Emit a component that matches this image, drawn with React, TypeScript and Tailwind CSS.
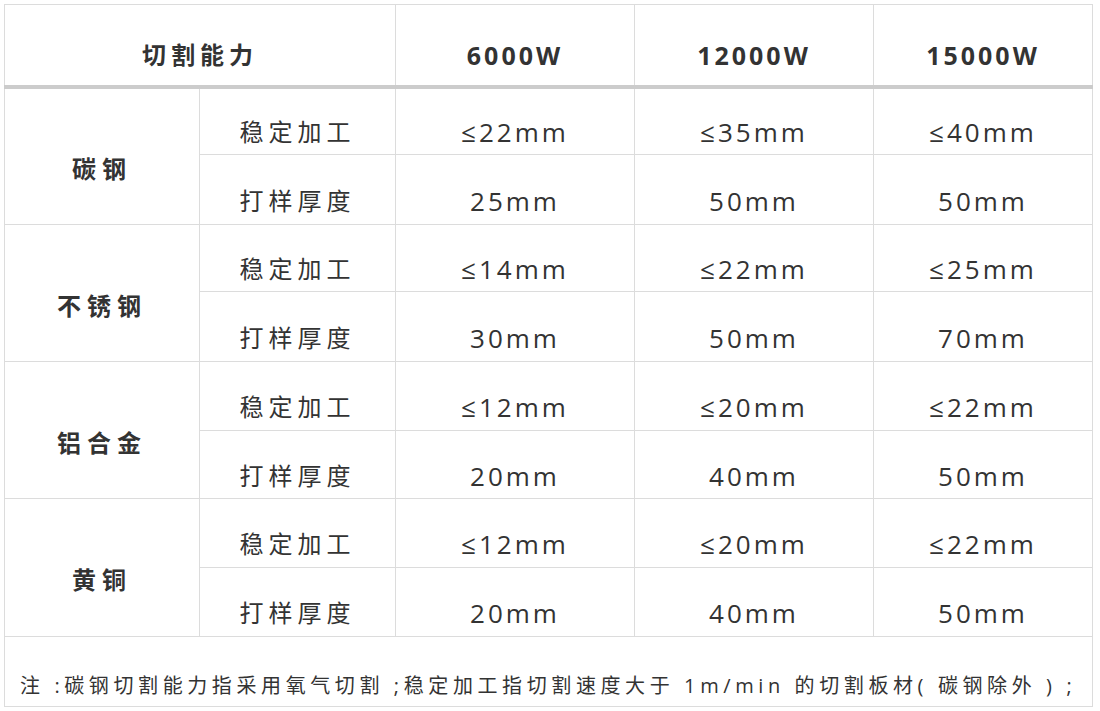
import React from "react";

const rows = [
  {
    name: "碳钢",
    a: ["≤22mm", "≤35mm", "≤40mm"],
    b: ["25mm", "50mm", "50mm"],
  },
  {
    name: "不锈钢",
    a: ["≤14mm", "≤22mm", "≤25mm"],
    b: ["30mm", "50mm", "70mm"],
  },
  {
    name: "铝合金",
    a: ["≤12mm", "≤20mm", "≤22mm"],
    b: ["20mm", "40mm", "50mm"],
  },
  {
    name: "黄铜",
    a: ["≤12mm", "≤20mm", "≤22mm"],
    b: ["20mm", "40mm", "50mm"],
  },
];

const heights: [string, string][] = [
  ["h-[68px]", "h-[70px]"],
  ["h-[67px]", "h-[70px]"],
  ["h-[69px]", "h-[68px]"],
  ["h-[69px]", "h-[69px]"],
];

export default function App() {
  const cell =
    "border border-[#dcdcdc] text-center align-middle pt-[22px] pb-0 px-0 text-[24px] leading-[32px] tracking-[5px] text-[#333333]";
  const num =
    "border border-[#dcdcdc] text-center align-middle pt-[22px] pb-0 px-0 text-[26px] leading-[32px] tracking-[3px] text-[#333333]";
  return (
    <div
      className="bg-white w-[1100px] h-[711px] pt-[4px] pl-[4px]"
      style={{ fontFamily: '"Open Sans", "Noto Sans CJK SC", sans-serif' }}
    >
      <table className="border-collapse table-fixed w-[1088px]">
        <colgroup>
          <col className="w-[195px]" />
          <col className="w-[196px]" />
          <col className="w-[239px]" />
          <col className="w-[239px]" />
          <col className="w-[219px]" />
        </colgroup>
        <thead>
          <tr className="h-[82px]">
            <th
              colSpan={2}
              className="border border-[#dcdcdc] border-b-[4px] border-b-[#cccccc] text-center align-middle pt-[20px] text-[24px] leading-[32px] tracking-[5px] font-bold text-[#333333]"
            >
              切割能力
            </th>
            {["6000W", "12000W", "15000W"].map((h) => (
              <th
                key={h}
                className="border border-[#dcdcdc] border-b-[4px] border-b-[#cccccc] text-center align-middle pt-[20px] text-[25px] leading-[32px] tracking-[3px] font-bold text-[#333333]"
              >
                {h}
              </th>
            ))}
          </tr>
        </thead>
        <tbody>
          {rows.map((r, i) => (
            <React.Fragment key={r.name}>
              <tr className={heights[i][0]}>
                <td
                  rowSpan={2}
                  className="border border-[#dcdcdc] text-center align-middle pt-[25px] text-[24px] leading-[32px] tracking-[6px] font-bold text-[#333333]"
                >
                  {r.name}
                </td>
                <td className={cell}>稳定加工</td>
                {r.a.map((v, j) => (
                  <td key={j} className={num}>
                    {v}
                  </td>
                ))}
              </tr>
              <tr className={heights[i][1]}>
                <td className={cell}>打样厚度</td>
                {r.b.map((v, j) => (
                  <td key={j} className={num}>
                    {v}
                  </td>
                ))}
              </tr>
            </React.Fragment>
          ))}
          <tr className="h-[70px]">
            <td
              colSpan={5}
              className="border border-[#dcdcdc] text-left align-middle pt-[29px] pl-[15px] text-[20px] leading-[28px] tracking-[4.6px] text-[#333333] whitespace-nowrap"
            >
              注 :碳钢切割能力指采用氧气切割 ;稳定加工指切割速度大于 1m/min 的切割板材( 碳钢除外 ) ;
            </td>
          </tr>
        </tbody>
      </table>
    </div>
  );
}
